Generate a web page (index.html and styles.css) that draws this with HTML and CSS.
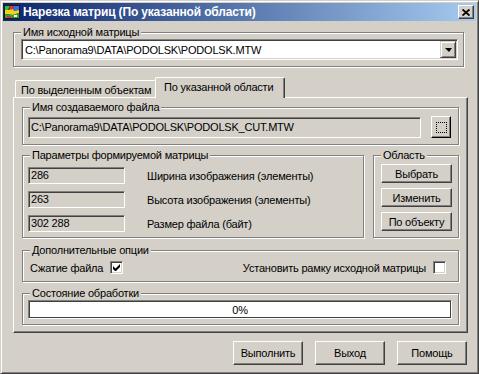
FILE: index.html
```html
<!DOCTYPE html>
<html lang="ru">
<head>
  <meta charset="UTF-8" />
  <title>Нарезка матриц</title>
  <link rel="stylesheet" href="styles.css">
</head>
<body>

  <div class="window">
    <div class="titlebar">
      <svg class="app-icon" width="16" height="16" viewBox="0 0 16 16">
        <rect x="0" y="1" width="16" height="14" fill="#1a1a1a"/>
        <path d="M1 2h5l-2 4H1z" fill="#2fbf3a"/>
        <path d="M6 2h4l-1 3-4 1z" fill="#e03030"/>
        <path d="M10 2h5v4l-5 1-1-2z" fill="#3a6ee8"/>
        <path d="M1 6h3l5-1 1 2 5-1v3l-6 2-8-1z" fill="#f2d21c"/>
        <path d="M1 10l8 1 6-2v5H1z" fill="#2fa03a"/>
        <path d="M3 12h4v2H3z" fill="#e03030"/>
        <path d="M10 11h3v2h-3z" fill="#ffffff"/>
      </svg>
      <span class="title">Нарезка матриц (По указанной области)</span>
      <div class="close-btn">
        <svg width="8" height="7" viewBox="0 0 8 7">
          <path d="M0.5 0.5L7.5 6.5M7.5 0.5L0.5 6.5" stroke="#000" stroke-width="1.8"/>
        </svg>
      </div>
    </div>

    <div class="client">
      <fieldset class="group source">
        <legend>Имя исходной матрицы</legend>
        <div class="combo">
          <span class="combo-text">C:\Panorama9\DATA\PODOLSK\PODOLSK.MTW</span>
          <span class="combo-btn"><i class="arrow"></i></span>
        </div>
      </fieldset>

      <div class="tabs">
        <div class="tab first">По выделенным объектам</div>
        <div class="tab active">По указанной области</div>
      </div>

      <div class="tab-panel">
        <fieldset class="group target">
          <legend>Имя создаваемого файла</legend>
          <div class="file-row">
            <div class="field readonly">C:\Panorama9\DATA\PODOLSK\PODOLSK_CUT.MTW</div>
            <div class="btn browse"><span class="focus-rect"></span></div>
          </div>
        </fieldset>

        <div class="middle-row">
          <fieldset class="group params">
            <legend>Параметры формируемой матрицы</legend>
            <div class="param">
              <div class="field readonly small">286</div>
              <span>Ширина изображения (элементы)</span>
            </div>
            <div class="param">
              <div class="field readonly small">263</div>
              <span>Высота изображения (элементы)</span>
            </div>
            <div class="param">
              <div class="field readonly small">302 288</div>
              <span>Размер файла (байт)</span>
            </div>
          </fieldset>

          <fieldset class="group area">
            <legend>Область</legend>
            <div class="btn area-btn">Выбрать</div>
            <div class="btn area-btn">Изменить</div>
            <div class="btn area-btn">По объекту</div>
          </fieldset>
        </div>

        <fieldset class="group options">
          <legend>Дополнительные опции</legend>
          <div class="options-row">
            <label class="check">Сжатие файла
              <span class="box">
                <svg width="7" height="7" viewBox="0 0 7 7">
                  <path d="M0 2v3l2 2h1l4-4V0L2.5 4.5z" fill="#000"/>
                </svg>
              </span>
            </label>
            <label class="check">Установить рамку исходной матрицы
              <span class="box"></span>
            </label>
          </div>
        </fieldset>

        <fieldset class="group status">
          <legend>Состояние обработки</legend>
          <div class="progress">0%</div>
        </fieldset>
      </div>

      <div class="actions">
        <div class="btn action">Выполнить</div>
        <div class="btn action">Выход</div>
        <div class="btn action">Помощь</div>
      </div>
    </div>
  </div>

</body>
</html>
```

FILE: styles.css
```css
/* Окно в классическом стиле Windows */
* {
  box-sizing: border-box;
}

body {
  margin: 0;
  font-family: "Liberation Sans", Arial, sans-serif;
  font-size: 11px;
  letter-spacing: -0.2px;
  color: #000;
  background-color: #d4d0c8;
}

.window {
  width: 479px;
  height: 374px;
  padding: 2px;
  display: flex;
  flex-direction: column;
  background-color: #d4d0c8;
  border: 1px solid;
  border-color: #d4d0c8 #404040 #404040 #d4d0c8;
  box-shadow: inset 1px 1px 0 #fff, inset -1px -1px 0 #808080;
}

/* Заголовок */
.titlebar {
  height: 18px;
  display: flex;
  align-items: center;
  padding: 0 2px 0 1px;
  background: linear-gradient(to right, #0a246a, #a6caf0);
  color: #fff;
}

.app-icon {
  flex: none;
}

.title {
  margin-left: 3px;
  font-weight: bold;
  font-size: 12px;
  letter-spacing: -0.16px;
  white-space: nowrap;
}

.close-btn {
  margin-left: auto;
  width: 16px;
  height: 14px;
  display: flex;
  align-items: center;
  justify-content: center;
  background-color: #d4d0c8;
  border: 1px solid;
  border-color: #fff #404040 #404040 #fff;
  box-shadow: inset -1px -1px 0 #808080;
}

.client {
  flex: 1;
  display: flex;
  flex-direction: column;
  padding: 5px 8px 0 10px;
}

/* Рамки групп: подпись на 10px от левой линии */
.group {
  margin: 0;
  min-width: 0;
  border: 1px solid #808080;
  box-shadow: 1px 1px 0 #fff, inset 1px 1px 0 #fff;
}

.group legend {
  padding: 0 2px;
  margin-left: 0;
  line-height: 13px;
  background-color: #d4d0c8;
  white-space: nowrap;
}

.source {
  margin-right: 4px;
  padding: 0 5px 6px 7px;
}

/* Выпадающий список */
.combo {
  height: 21px;
  display: flex;
  align-items: center;
  background-color: #fff;
  border: 1px solid;
  border-color: #808080 #fff #fff #808080;
  box-shadow: inset 1px 1px 0 #404040, inset -1px -1px 0 #d4d0c8;
}

.combo-text {
  flex: 1;
  padding-left: 3px;
  white-space: nowrap;
}

.combo-btn {
  width: 16px;
  height: 17px;
  margin-right: 1px;
  display: flex;
  align-items: center;
  justify-content: center;
  background-color: #d4d0c8;
  border: 1px solid;
  border-color: #d4d0c8 #404040 #404040 #d4d0c8;
  box-shadow: inset 1px 1px 0 #fff, inset -1px -1px 0 #808080;
}

.arrow {
  width: 0;
  height: 0;
  border-left: 4px solid transparent;
  border-right: 3px solid transparent;
  border-top: 4px solid #000;
  margin-top: 1px;
}

/* Вкладки */
.tabs {
  height: 20px;
  margin-top: 10px;
  padding-left: 2px;
  display: flex;
  align-items: flex-end;
}

.tab {
  height: 17px;
  padding: 3px 5px 0;
  white-space: nowrap;
  background-color: #d4d0c8;
  border: 1px solid #fff;
  border-bottom: none;
  border-right-color: #404040;
  border-radius: 2px 2px 0 0;
  box-shadow: inset -1px 0 0 #808080;
}

.tab.first {
  width: 142px;
}

.tab.active {
  position: relative;
  z-index: 1;
  height: 21px;
  width: 130px;
  margin: 0 0 -1px -2px;
  padding: 3px 8px 0;
}

.tab-panel {
  height: 236px;
  padding: 3px 8px 0;
  border: 1px solid;
  border-color: #fff #404040 #404040 #fff;
  box-shadow: inset -1px -1px 0 #808080;
}

/* Поля */
.field {
  height: 21px;
  padding: 3px 0 0 2px;
  white-space: nowrap;
  border: 1px solid;
  border-color: #808080 #fff #fff #808080;
  box-shadow: inset 1px 1px 0 #404040, inset -1px -1px 0 #d4d0c8;
}

.field.readonly {
  background-color: #d4d0c8;
}

.target {
  padding: 3px 7px 6px 5px;
}

.target legend,
.params legend,
.status legend {
  margin-left: 2px;
}

.file-row {
  display: flex;
  gap: 10px;
}

.file-row .field {
  flex: 1;
}

/* Кнопки */
.btn {
  display: flex;
  align-items: center;
  justify-content: center;
  white-space: nowrap;
  background-color: #d4d0c8;
  border: 1px solid;
  border-color: #fff #404040 #404040 #fff;
  box-shadow: inset -1px -1px 0 #808080;
}

.browse {
  width: 20px;
  height: 22px;
  margin-top: -1px;
  border-color: #fff #000 #000 #fff;
  box-shadow: inset -1px -1px 0 #808080, inset 1px 1px 0 #d4d0c8;
}

.focus-rect {
  width: 11px;
  height: 11px;
  border: 1px dotted #000;
}

.middle-row {
  margin-top: 4px;
  display: flex;
  gap: 9px;
}

.params {
  flex: 1;
  padding: 5px;
  display: flex;
  flex-direction: column;
  gap: 7px;
}

.param {
  display: flex;
  align-items: center;
  gap: 22px;
}

.field.small {
  width: 97px;
  height: 17px;
  padding-top: 1px;
}

.area {
  width: 86px;
  padding: 2px 6px 5px 7px;
  display: flex;
  flex-direction: column;
  gap: 5px;
}

.area-btn {
  height: 19px;
}

/* Дополнительные опции */
.options {
  margin-top: 6px;
  padding: 4px 12px 7px 7px;
}

.options-row {
  display: flex;
  justify-content: space-between;
  align-items: center;
}

.check {
  display: flex;
  align-items: center;
  gap: 7px;
}

.box {
  width: 13px;
  height: 13px;
  display: flex;
  align-items: center;
  justify-content: center;
  background-color: #fff;
  border: 1px solid;
  border-color: #808080 #fff #fff #808080;
  box-shadow: inset 1px 1px 0 #404040, inset -1px -1px 0 #d4d0c8;
}

.status {
  margin-top: 5px;
  padding: 0 6px 5px 5px;
}

.progress {
  height: 19px;
  display: flex;
  align-items: center;
  justify-content: center;
  background-color: #fff;
  border: 1px solid;
  border-color: #808080 #fff #fff #808080;
  box-shadow: inset 1px 1px 0 #404040, inset -1px -1px 0 #404040;
}

/* Нижние кнопки */
.actions {
  margin-top: 8px;
  margin-right: 1px;
  display: flex;
  justify-content: flex-end;
  gap: 12px;
}

.action {
  width: 70px;
  height: 24px;
}
```
